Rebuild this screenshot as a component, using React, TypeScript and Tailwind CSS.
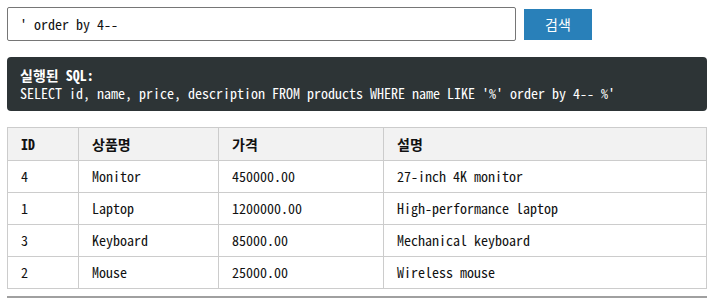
import React from "react";

const mono = { fontFamily: '"Noto Sans Mono CJK KR", "Liberation Mono", "Noto Sans CJK KR", monospace' };

const rows = [
  ["4", "Monitor", "450000.00", "27-inch 4K monitor"],
  ["1", "Laptop", "1200000.00", "High-performance laptop"],
  ["3", "Keyboard", "85000.00", "Mechanical keyboard"],
  ["2", "Mouse", "25000.00", "Wireless mouse"],
];

export default function App() {
  return (
    <div className="w-[716px] h-[301px] overflow-hidden bg-white px-[7px] pt-[7px] text-[14px] text-[#111]" style={mono}>
      <div className="flex items-center gap-[8px] w-[585px]">
        <div className="w-[509px] h-[34px] border border-[#767676] rounded-[2px] flex items-center px-[12px] text-[#111] leading-none">
          ' order by 4--
        </div>
        <button className="w-[68px] h-[31px] bg-[#2980b9] text-white text-[14px] leading-none flex items-center justify-center">
          검색
        </button>
      </div>
      <div className="mt-[16px] w-[700px] bg-[#2d3436] rounded-[4px] px-[13px] pt-[9px] pb-[9px] text-white leading-[18px]">
        <div className="font-bold">실행된 SQL:</div>
        <div className="whitespace-pre">SELECT id, name, price, description FROM products WHERE name LIKE '%' order by 4-- %'</div>
      </div>
      <table className="mt-[16px] w-[700px] border-collapse table-fixed">
        <colgroup>
          <col className="w-[71px]" />
          <col className="w-[140px]" />
          <col className="w-[165px]" />
          <col />
        </colgroup>
        <thead>
          <tr className="bg-[#f2f2f2] h-[33px]">
            {["ID", "상품명", "가격", "설명"].map((h) => (
              <th key={h} className="border border-[#cccccc] px-[13px] text-left font-bold">{h}</th>
            ))}
          </tr>
        </thead>
        <tbody>
          {rows.map((r) => (
            <tr key={r[0]} className="h-[32px]">
              {r.map((c, i) => (
                <td key={i} className="border border-[#cccccc] px-[13px] text-left">{c}</td>
              ))}
            </tr>
          ))}
        </tbody>
      </table>
      <div className="mt-[7px] w-[700px] border-t-2 border-[#a0a0a0]" />
    </div>
  );
}
